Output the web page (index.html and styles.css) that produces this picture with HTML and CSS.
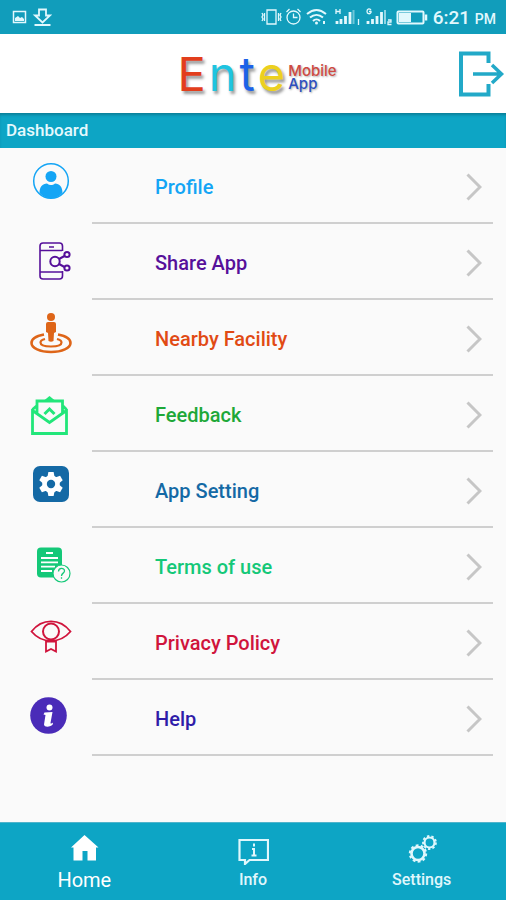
FILE: index.html
```html
<!DOCTYPE html>
<html lang="en">
<head>
<meta charset="utf-8">
<meta name="viewport" content="width=device-width, initial-scale=1">
<title>Ente Mobile App</title>
<link rel="stylesheet" href="styles.css">
</head>
<body>
<div class="app">
  <div class="status">
    <svg class="status-left" width="40" height="20" viewBox="0 0 40 20" fill="none" stroke="currentColor">
      <rect x="1.500" y="4.500" width="12" height="11" stroke-width="1.500"/>
      <path d="M3 14v-3l3-2 2 2 2-1 2 2v2z" fill="currentColor" stroke="none"/>
      <path d="M27 2.500h7v6h4l-7.500 7-7.500-7h4zM22.500 18h16" stroke-width="1.800"/>
    </svg>
    <div class="status-right">
      <svg width="168" height="20" viewBox="0 0 168 20" fill="none" stroke="currentColor" stroke-width="1.300">
        <path d="M6 3h9v14H6zM3.500 6v8M17.500 6v8M1 6l1 2-1 2 1 2-1 2M20 6l-1 2 1 2-1 2 1 2"/>
        <circle cx="32.500" cy="10.500" r="6.500"/>
        <path d="M32.500 6.500v4h4M25.500 5l3-3M39.500 5l-3-3"/>
        <g stroke-width="2"><path d="M46 7c6-5 13-5 19 0M49 10.500c4-3.500 9-3.500 13 0M52 14c2-2 5-2 7 0"/></g>
        <circle cx="55.500" cy="16" r="1.500" fill="currentColor" stroke="none"/>
        <path d="M63 14v3" stroke-width="2"/>
        <path d="M75 2v5M79 2v5M75 4.500h4"/>
        <path d="M76 17v-3M80 17v-5M84.500 17v-8M89 17V5" stroke-width="2.800"/>
        <path d="M92.500 17V3" stroke-width="2" opacity=".45"/><path d="M97.500 12v6"/>
        <path d="M110 3c-2-2-4-1-4 1.500s3 3 4 1V4.500h-2"/>
        <path d="M107 17v-3M111.500 17v-5M116 17v-8M120.500 17V5" stroke-width="2.800"/>
        <path d="M124 17V3" stroke-width="2" opacity=".6"/><path d="M127 13h3v2h-3v2.500h3.500"/>
        <rect x="136.500" y="4.500" width="26" height="12" rx="1" stroke-width="2"/>
        <rect x="138" y="6" width="12" height="9" fill="currentColor" stroke="none"/>
        <path d="M165 7.500v6" stroke-width="2.500"/>
      </svg>
      <span class="time">6:21 <span class="meridiem">PM</span></span>
    </div>
  </div>

  <header class="brand">
    <h1 class="logo">
      <span class="logo-main"><span class="red">E</span><span class="cyan">n</span><span class="blue">t</span><span class="yellow">e</span></span>
      <span class="logo-sub"><span class="brick">Mobile</span><span class="navy">App</span></span>
    </h1>
    <button class="logout" type="button" aria-label="Log out">
      <svg width="48" height="48" viewBox="0 0 48 48" fill="none" stroke="currentColor" stroke-width="4">
        <path d="M30.500 13V3.500H3v41h27.500V34"/>
        <path d="M15 24h28M34 15l9.500 9-9.500 9" stroke-width="3.500"/>
      </svg>
    </button>
  </header>

  <h2 class="title">Dashboard</h2>

  <main>
    <ul class="menu">
      <li><a class="row profile" href="#profile">
        <svg class="icon" viewBox="0 0 44 48">
          <circle cx="22" cy="21" r="17.300" fill="none" stroke="currentColor" stroke-width="1.500"/>
          <circle cx="22" cy="16.500" r="5.500" fill="currentColor"/>
          <path d="M10.500 33c0-6 3-9.500 7.500-9.500 2.500 2 5.500 2 8 0 4.500 0 7.500 3.500 7.500 9.500-6 7-17 7-23 0z" fill="currentColor"/>
        </svg>
        <span class="cell"><span>Profile</span><svg class="chev" viewBox="0 0 16 28"><path d="M1.500 1.500L14 14 1.500 26.500"/></svg></span></a></li>
      <li><a class="row share" href="#share">
        <svg class="icon line" viewBox="0 0 44 48">
          <path d="M33.500 15V10q0-3-3-3H14q-3 0-3 3v30q0 3 3 3h16.500q3 0 3-3v-5M11 14.500h22M11 36h22.500" stroke-width="1.600"/>
          <path d="M20 11h5" stroke-width="1.500"/>
          <circle cx="26" cy="25.500" r="4.700"/><circle cx="38" cy="18.500" r="2.600"/><circle cx="38" cy="32" r="2.600"/>
          <path d="M30 23l5.500-3M30 28l5.500 3" stroke-width="2"/>
        </svg>
        <span class="cell"><span>Share App</span><svg class="chev" viewBox="0 0 16 28"><path d="M1.500 1.500L14 14 1.500 26.500"/></svg></span></a></li>
      <li><a class="row nearby" href="#nearby">
        <svg class="icon line" viewBox="0 0 44 48">
          <circle cx="22" cy="5" r="4" fill="currentColor" stroke="none"/>
          <path d="M19 10h6q2 0 2 2v8l-2 1-.5 8q-2.500 1.500-5 0L19 21l-2-1v-8q0-2 2-2z" fill="currentColor" stroke="none"/>
          <path d="M15 22.500C7 24 2.500 27 2.500 31c0 5 8.500 9 19.500 9s19.500-4 19.500-9c0-4-4.500-7-12.500-8.500" stroke-width="2.600"/>
          <path d="M16 27c-3 .8-4.500 2-4.500 3.500 0 2.500 4.500 4 10.500 4s10.500-1.500 10.500-4c0-1.500-1.500-2.700-4.500-3.500" stroke-width="2.200"/>
        </svg>
        <span class="cell"><span>Nearby Facility</span><svg class="chev" viewBox="0 0 16 28"><path d="M1.500 1.500L14 14 1.500 26.500"/></svg></span></a></li>
      <li><a class="row feedback" href="#feedback">
        <svg class="icon line" viewBox="0 0 44 48">
          <path d="M3.500 21v24.500h34V21M3.500 22.500l17 12 17-12M8 26V13h25.500v13M7.500 18l-4 3.500M34 18l3.500 3.500" stroke-width="2.800"/>
          <path d="M15 12.500l5.500-4.500 5.500 4.500z" fill="currentColor" stroke="none"/>
          <path d="M15.500 26l5-5 5 5" stroke-width="3"/>
        </svg>
        <span class="cell"><span>Feedback</span><svg class="chev" viewBox="0 0 16 28"><path d="M1.500 1.500L14 14 1.500 26.500"/></svg></span></a></li>
      <li><a class="row setting" href="#app-setting">
        <svg class="icon" viewBox="0 0 44 48">
          <rect x="4" y="2" width="36" height="36" rx="7" fill="currentColor"/>
          <g fill="#fff" transform="translate(22 20)">
            <circle r="8.800"/>
            <path id="tooth" d="M-3.600-7l1-5h5.200l1 5z"/>
            <use href="#tooth" transform="rotate(60)"/><use href="#tooth" transform="rotate(120)"/><use href="#tooth" transform="rotate(180)"/><use href="#tooth" transform="rotate(240)"/><use href="#tooth" transform="rotate(300)"/>
          </g>
          <circle cx="22" cy="20" r="4.200" fill="currentColor"/>
        </svg>
        <span class="cell"><span>App Setting</span><svg class="chev" viewBox="0 0 16 28"><path d="M1.500 1.500L14 14 1.500 26.500"/></svg></span></a></li>
      <li><a class="row terms" href="#terms">
        <svg class="icon" viewBox="0 0 44 48">
          <rect x="8" y="7.500" width="25" height="30" rx="4" fill="currentColor"/>
          <path d="M17 13h7M12 18h17M12 22.300h17M12 26.600h14M12 31h11" stroke="#fff" stroke-width="1.800"/>
          <circle cx="32.500" cy="33.500" r="8.500" fill="#fafafa" stroke="currentColor" stroke-width="1.200"/>
          <path d="M29.500 31.500c0-4 6-4 6-.5 0 2.300-3 2-3 5M32.500 37.300v1.500" fill="none" stroke="currentColor" stroke-width="1.300"/>
        </svg>
        <span class="cell"><span>Terms of use</span><svg class="chev" viewBox="0 0 16 28"><path d="M1.500 1.500L14 14 1.500 26.500"/></svg></span></a></li>
      <li><a class="row privacy" href="#privacy">
        <svg class="icon line" viewBox="0 0 44 48">
          <path d="M2.500 15.500C13 2 31 2 41.500 15.500 31 28 13 28 2.500 15.500z" stroke-width="1.800"/>
          <circle cx="22" cy="15.500" r="8"/>
          <path d="M17 24v11.500l5-2.500 5 2.500V24M17 25.500h10" stroke-width="1.800"/>
        </svg>
        <span class="cell"><span>Privacy Policy</span><svg class="chev" viewBox="0 0 16 28"><path d="M1.500 1.500L14 14 1.500 26.500"/></svg></span></a></li>
      <li><a class="row help" href="#help">
        <svg class="icon" viewBox="0 0 44 48">
          <circle cx="19.500" cy="23.500" r="18.300" fill="currentColor"/>
          <g fill="#fff"><circle cx="20.500" cy="15.500" r="3"/>
          <path d="M15.500 20.500l8-.5-2 11c0 1 1.500.5 2-.5l.5 1.500c-2 3-8.500 4-9 .5l1.500-9.500-2-.5z"/></g>
        </svg>
        <span class="cell"><span>Help</span><svg class="chev" viewBox="0 0 16 28"><path d="M1.500 1.500L14 14 1.500 26.500"/></svg></span></a></li>
    </ul>
  </main>

  <nav class="tabs">
    <a class="tab active" href="#home">
      <svg width="32" height="32" viewBox="0 0 32 32" fill="currentColor"><path d="M16.500 2l14 12.500h-2.500V27.500h-8.500V18h-5v9.500H5.500v-13H3z"/></svg>
      <span>Home</span></a>
    <a class="tab" href="#info">
      <svg width="32" height="32" viewBox="0 0 32 32" fill="none" stroke="currentColor" stroke-width="2.200"><path d="M2.500 7h28.500v20H12.500L8 31v-4H2.500z"/><path d="M17 10.500v3M15 16h2v6.500M14.500 22.500h5" stroke-width="2"/></svg>
      <span>Info</span></a>
    <a class="tab" href="#settings">
      <svg width="32" height="32" viewBox="0 0 32 32" fill="none" stroke="currentColor">
        <circle cx="12" cy="20.500" r="6.500" stroke-width="2.600"/><circle cx="12" cy="20.500" r="8.200" stroke-width="2" stroke-dasharray="2.800 2.352"/>
        <circle cx="23.500" cy="9.500" r="5" stroke-width="2.200"/><circle cx="23.500" cy="9.500" r="6.500" stroke-width="1.800" stroke-dasharray="2.400 2.138"/>
      </svg>
      <span>Settings</span></a>
  </nav>
</div>
</body>
</html>
```
FILE: styles.css
```css
* { box-sizing: border-box; }
body {
  margin: 0;
  background: #fafafa;
  font-family: Roboto, "Liberation Sans", sans-serif;
}
a { text-decoration: none; color: inherit; }
svg { display: block; flex: none; }
.app { min-height: 100vh; display: flex; flex-direction: column; }
main { flex: 1; }

.status {
  height: 34px;
  padding: 0 10px 0 12px;
  display: flex;
  align-items: center;
  justify-content: space-between;
  background: #119dbb;
  color: #e2f8fd;
}
.status-right { display: flex; align-items: center; gap: 4px; }
.time { padding-top: 2px; font-size: 19px; line-height: 24px; font-weight: 500; white-space: nowrap; }
.meridiem { font-size: 14px; }

.brand {
  position: relative;
  height: 79px;
  display: flex;
  align-items: center;
  justify-content: center;
  background: #fff;
}
.logo { margin: 0; padding-left: 8px; display: flex; align-items: center; gap: 3px; }
.logo-main {
  display: flex;
  gap: 3px;
  font: 400 47px/48px Inter, sans-serif;
  text-shadow: 2px 3px 3px #0006;
}
.logo-sub {
  display: flex;
  flex-direction: column;
  padding-top: 6px;
  font: 500 15px/13px Inter, sans-serif;
  text-shadow: 1px 1px 2px #0005;
}
.red { color: #e23e1c; }
.cyan { color: #1fc4e0; }
.blue { color: #1c62e8; }
.yellow { color: #ecd01f; }
.brick { color: #cf4a42; }
.navy { color: #2d4fc0; }
.logout {
  position: absolute;
  right: 0;
  top: 16px;
  padding: 0;
  border: 0;
  background: none;
  color: #22a9c8;
}

.title {
  margin: 0;
  padding: 0 6px;
  background: #0da5c5;
  box-shadow: inset 0 3px 3px -1px #0b7f98;
  color: #e6f9fd;
  font-size: 17px;
  line-height: 35px;
  font-weight: 500;
}

.menu { margin: 0; padding: 0; list-style: none; }
.row { display: flex; height: 76px; padding: 0 13px 0 29px; }
.icon { width: 44px; height: 48px; margin: 12px 19px 0 0; }
.line { fill: none; stroke: currentColor; stroke-width: 2; }
.cell {
  flex: 1;
  display: flex;
  align-items: center;
  justify-content: space-between;
  padding: 4px 11px 0 63px;
  border-bottom: 2px solid #cfcfcf;
  font-size: 20px;
  line-height: 24px;
  font-weight: 500;
}
.chev { width: 16px; height: 28px; fill: none; stroke: #c6c6c6; stroke-width: 3; }
.profile { color: #14a5f5; }
.share { color: #56109a; }
.nearby .icon { color: #de6518; }
.nearby { color: #e14a14; }
.feedback .icon { color: #22e67a; }
.feedback { color: #1ea838; }
.setting { color: #1469a5; }
.terms { color: #14c878; }
.privacy { color: #d0143c; }
.help .icon { color: #4a2bb8; }
.help { color: #2f1ca8; }

.tabs {
  height: 78px;
  display: grid;
  grid-template-columns: repeat(3, 1fr);
  background: #0da5c5;
  border-top: 1px solid #4fb4cc;
  color: #e0f7fc;
}
.tab {
  display: flex;
  flex-direction: column;
  align-items: center;
  padding-top: 10px;
  font-size: 16px;
  line-height: 30px;
  font-weight: 500;
}
.active { color: #fff; font-size: 20px; font-weight: 400; }
```
